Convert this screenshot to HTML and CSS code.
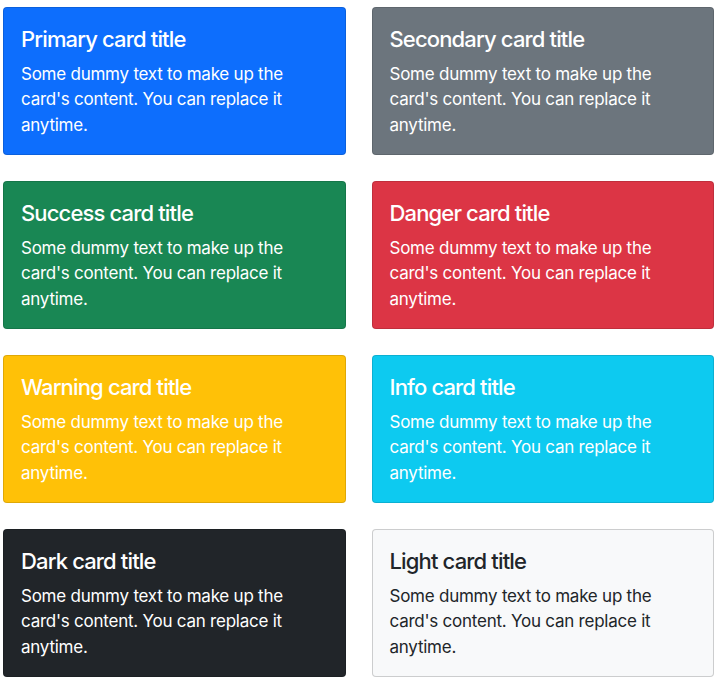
FILE: index.html
```html
<!DOCTYPE html>
<html lang="en">
<head>
<meta charset="utf-8">
<link rel="stylesheet" href="styles.css">
</head>
<body>
<div class="grid">
  <div class="card primary"><div class="card-body"><h5 class="card-title">Primary card title</h5><p class="card-text">Some dummy text to make up the card's content. You can replace it anytime.</p></div></div>
  <div class="card secondary"><div class="card-body"><h5 class="card-title">Secondary card title</h5><p class="card-text">Some dummy text to make up the card's content. You can replace it anytime.</p></div></div>
  <div class="card success"><div class="card-body"><h5 class="card-title">Success card title</h5><p class="card-text">Some dummy text to make up the card's content. You can replace it anytime.</p></div></div>
  <div class="card danger"><div class="card-body"><h5 class="card-title">Danger card title</h5><p class="card-text">Some dummy text to make up the card's content. You can replace it anytime.</p></div></div>
  <div class="card warning"><div class="card-body"><h5 class="card-title">Warning card title</h5><p class="card-text">Some dummy text to make up the card's content. You can replace it anytime.</p></div></div>
  <div class="card info"><div class="card-body"><h5 class="card-title">Info card title</h5><p class="card-text">Some dummy text to make up the card's content. You can replace it anytime.</p></div></div>
  <div class="card dark"><div class="card-body"><h5 class="card-title">Dark card title</h5><p class="card-text">Some dummy text to make up the card's content. You can replace it anytime.</p></div></div>
  <div class="card light"><div class="card-body"><h5 class="card-title">Light card title</h5><p class="card-text">Some dummy text to make up the card's content. You can replace it anytime.</p></div></div>
</div>
</body>
</html>
```
FILE: styles.css
```css
html, body { margin: 0; padding: 0; background: #fff; }
body {
  font-family: Inter, "Liberation Sans", sans-serif;
  font-size: 17px;
  line-height: 1.5;
  color: #212529;
}
.grid {
  display: grid;
  grid-template-columns: 1fr 1fr;
  column-gap: 26px;
  row-gap: 26px;
  padding: 7px 6px 0 3px;
}
.card {
  border: 1px solid rgba(0,0,0,.125);
  border-radius: 4px;
  color: #fff;
}
.card-body { padding: 18px 17px 15.5px; }
.card-title {
  margin: 0 0 8.5px;
  font-size: 22px;
  font-weight: 500;
  line-height: 1.2;
  letter-spacing: -0.85px;
}
.card-text { margin: 0; letter-spacing: -0.24px; padding-top: 1px; }
.primary { background: #0d6efd; }
.secondary { background: #6c757d; }
.success { background: #198754; }
.danger { background: #dc3545; }
.warning { background: #ffc107; }
.info { background: #0dcaf0; }
.dark { background: #212529; }
.light { background: #f8f9fa; color: #212529; border-color: rgba(0,0,0,.175); }
```
